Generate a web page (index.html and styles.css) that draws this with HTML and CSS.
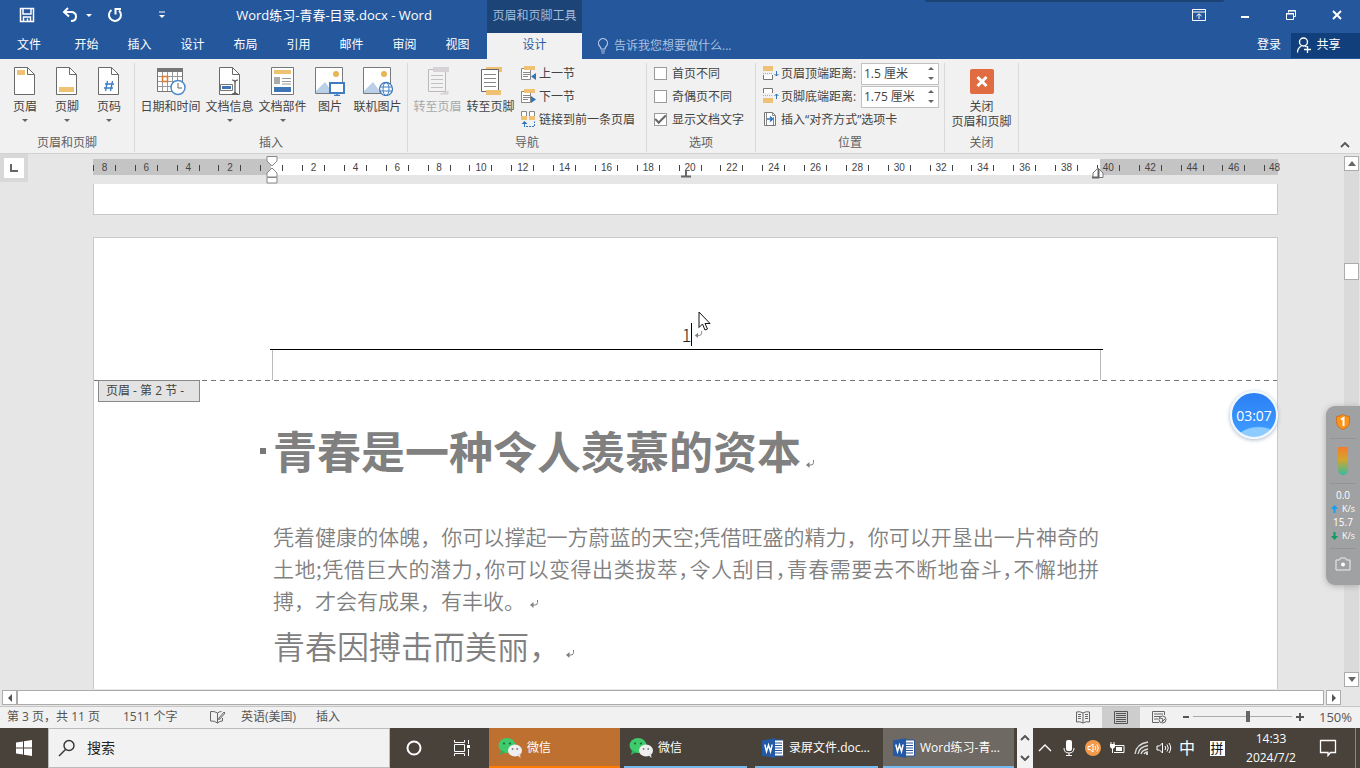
FILE: index.html
```
<!DOCTYPE html>
<html lang="zh-CN">
<head>
<meta charset="utf-8">
<title>Word练习-青春-目录.docx - Word</title>
<link rel="stylesheet" href="styles.css">
</head>
<body>
<svg class="defs" aria-hidden="true">
  <symbol id="wechat" viewBox="0 0 24 20">
    <ellipse cx="9" cy="7.500" rx="8.500" ry="7.500" fill="#3dcb6c"/><path d="M3 12l-1 5 5-3z" fill="#2bb55a"/>
    <circle cx="6" cy="5.500" r="1.100" fill="#1b6b35"/><circle cx="12" cy="5.500" r="1.100" fill="#1b6b35"/>
    <ellipse cx="17" cy="12.500" rx="7" ry="6" fill="#efefef"/><path d="M19 17l3.500 3-.5-5z" fill="#e0e0e0"/>
    <circle cx="14.600" cy="11" r=".9" fill="#777"/><circle cx="19.200" cy="11" r=".9" fill="#777"/>
  </symbol>
  <symbol id="word" viewBox="0 0 22 20">
    <path d="M11 2h10.500v16H11z" fill="#fff" stroke="#2b579a"/><path d="M13 5h7M13 7.500h7M13 10h7M13 12.500h7M13 15h7" stroke="#2b579a" stroke-width="1.200"/>
    <path d="M0 2.500L13 0v20L0 17.500z" fill="#2459a5"/><path d="M2.800 6.500l1.700 7 2-6.500 2 6.500 1.700-7" fill="none" stroke="#fff" stroke-width="1.500"/>
  </symbol>
  <symbol id="return" viewBox="0 0 10 10"><path d="M8.500 1v2.500Q8.500 6 6 6H2" fill="none" stroke="#808080"/><path d="M4.500 3v6L1 6z" fill="#808080"/></symbol>
  <symbol id="page" viewBox="0 0 24 30"><path d="M1.500 1.500h13l7 7v20h-20z" fill="#fff" stroke="#6a6a6a"/><path d="M14.500 1.500v7h7" fill="none" stroke="#6a6a6a"/></symbol>
  <symbol id="picture" viewBox="0 0 32 30"><path d="M1.500 1.500h27v26h-27z" fill="#fff" stroke="#7a7a7a"/><circle cx="22" cy="8" r="3" fill="#e9b455"/><path d="M2 25l9-9 8 11H2z" fill="#b9d0e8"/></symbol>
</svg>

<header class="titlebar">
  <div class="title-left">
    <div class="quick-access">
      <button class="qa save" aria-label="保存"><svg width="16" height="16" viewBox="0 0 16 16"><path d="M1.500 1.500h13v13h-13zM4 1.500v5.500h8V1.500M4.500 14.500V10h7v4.500M8.500 11.500v3" fill="none" stroke="#fff" stroke-width="1.500"/></svg></button>
      <button class="qa undo" aria-label="撤消"><svg width="16" height="16" viewBox="0 0 16 16"><path d="M6 1L2 5l5 4.500M2.500 5H9q5 0 5 4.500T9 14" fill="none" stroke="#fff" stroke-width="2"/></svg><i class="caret"></i></button>
      <button class="qa redo" aria-label="重复"><svg width="16" height="16" viewBox="0 0 16 16"><path d="M4.500 3A6 6 0 1 0 12 3.500M8.500 7.500V2H14" fill="none" stroke="#fff" stroke-width="2"/></svg></button>
      <button class="qa custom" aria-label="自定义快速访问工具栏"><svg width="8" height="8" viewBox="0 0 8 8"><path d="M1 1h6" stroke="#fff"/><path d="M1 4h6L4 7z" fill="#fff"/></svg></button>
    </div>
    <h1 class="doc-title">Word练习-青春-目录.docx - Word</h1>
  </div>
  <div class="tool-tab">页眉和页脚工具</div>
  <div class="window-buttons">
    <button aria-label="功能区显示选项"><svg width="14" height="12" viewBox="0 0 14 12"><path d="M.5.5h13v11H.5zM.5 3h13M7 10V5M4.500 7L7 4.800 9.500 7" fill="none" stroke="#fff"/></svg></button>
    <button aria-label="最小化"><svg width="12" height="12" viewBox="0 0 12 12"><path d="M2 8h8" stroke="#fff" stroke-width="2"/></svg></button>
    <button aria-label="还原"><svg width="12" height="12" viewBox="0 0 12 12"><path d="M3.500 3.500v-2h7v6h-2M1.500 4.500h7v6h-7zM1 5h8M3 2h8" fill="none" stroke="#fff"/></svg></button>
    <button aria-label="关闭"><svg width="12" height="12" viewBox="0 0 12 12"><path d="M2 2l8 8M10 2l-8 8" stroke="#fff" stroke-width="2"/></svg></button>
  </div>
</header>

<nav class="tabs">
  <button class="tab file">文件</button>
  <button class="tab">开始</button><button class="tab">插入</button><button class="tab">设计</button><button class="tab">布局</button><button class="tab">引用</button><button class="tab">邮件</button><button class="tab">审阅</button><button class="tab">视图</button>
  <button class="tab current">设计</button>
  <label class="tell-me"><svg width="12" height="16" viewBox="0 0 12 16"><path d="M4 11Q4 9.500 2.500 8A4.500 4.500 0 1 1 9.500 8Q8 9.500 8 11zM4 13h4M4.500 15h3" fill="none" stroke="#b4c9e6" stroke-width="1.200"/></svg><input type="text" aria-label="操作说明搜索" placeholder="告诉我您想要做什么..."></label>
  <button class="sign-in">登录</button>
  <button class="share"><svg width="16" height="18" viewBox="0 0 16 18"><circle cx="7.500" cy="6" r="4" fill="none" stroke="#fff" stroke-width="1.400"/><path d="M1.500 16.500q0-4.500 4-6.500M9 10l1.500 1M11.500 10v7M8 13.500h7" fill="none" stroke="#fff" stroke-width="1.300"/></svg>共享</button>
</nav>

<section class="ribbon">
  <div class="group g-hf">
    <div class="tools">
      <button class="big w42"><svg width="24" height="30"><use href="#page"/><path d="M4 4h8v5H4z" fill="#eec272"/></svg><span>页眉</span><i class="caret dark"></i></button>
      <button class="big w42"><svg width="24" height="30"><use href="#page"/><path d="M4 21h15v5H4z" fill="#eec272"/></svg><span>页脚</span><i class="caret dark"></i></button>
      <button class="big w42"><svg width="24" height="30"><use href="#page"/><path d="M10.500 15l-2 10M15.500 15l-2 10M8 18h9M7 22h9" stroke="#3a7fc4" stroke-width="1.300"/></svg><span>页码</span><i class="caret dark"></i></button>
    </div>
    <div class="group-name">页眉和页脚</div>
  </div>
  <div class="group g-insert">
    <div class="tools">
      <button class="big w65"><svg width="30" height="30" viewBox="0 0 30 30"><path d="M1.500 3.500h25v22h-25z" fill="#fff" stroke="#777"/><path d="M1 2h26v4H1z" fill="#777"/><path d="M6.500 6v19M11.500 6v19M16.500 6v19M21.500 6v19M2 10.500h24M2 15.500h24M2 20.500h24" stroke="#999"/><path d="M6.500 10.500h5v5h-5z" fill="none" stroke="#e07a2c" stroke-width="1.500"/><circle cx="22" cy="21.500" r="7" fill="#fff" stroke="#4c8bcb" stroke-width="1.500"/><path d="M22 17v5h4" fill="none" stroke="#666"/></svg><span>日期和时间</span></button>
      <button class="big w53"><svg width="24" height="30"><use href="#page"/><path d="M2.500 18.500h12v6h-12z" fill="#fff" stroke="#777"/><path d="M4 20h9v3H4z" fill="#3f75b5"/><path d="M14 14q3 0 3 2.500V26q0 2-3 2M20 14q-3 0-3 2.500V26q0 2 3 2" fill="none" stroke="#555" stroke-width="1.200"/></svg><span>文档信息</span><i class="caret dark"></i></button>
      <button class="big w53"><svg width="26" height="30"><path d="M1.500 1.500h22v27h-22z" fill="#fff" stroke="#777"/><path d="M4 4h17v4H4z" fill="#eec272"/><path d="M4 11h6v7H4z" fill="#aaa"/><path d="M12 12.500h9M12 15.500h9M12 18h9" stroke="#999"/><path d="M4 21h17v5H4z" fill="#3f75b5"/></svg><span>文档部件</span><i class="caret dark"></i></button>
      <button class="big w42"><svg width="32" height="30" viewBox="0 0 32 30"><use href="#picture"/><path d="M16 17h14v10H16z" fill="#fff" stroke="#3f7cc0" stroke-width="2"/><path d="M23 27v2M20 29.500h6" stroke="#3f7cc0" stroke-width="1.500"/></svg><span>图片</span></button>
      <button class="big w53"><svg width="32" height="30" viewBox="0 0 32 30"><use href="#picture"/><circle cx="24" cy="23" r="6.500" fill="#fff" stroke="#3f7cc0" stroke-width="1.300"/><ellipse cx="24" cy="23" rx="3" ry="6.500" fill="none" stroke="#3f7cc0"/><path d="M18 21h12M18 25h12" stroke="#3f7cc0"/></svg><span>联机图片</span></button>
    </div>
    <div class="group-name">插入</div>
  </div>
  <div class="group g-nav">
    <div class="tools">
      <button class="big w53 off" disabled><svg width="26" height="30"><path d="M15 28h8v-3" fill="#d6d2d6" stroke="#d6d2d6"/><path d="M3.500 3.500h17v22h-17z" fill="#f3f3f3" stroke="#bcb8bc"/><path d="M8 1h16v5H8z" fill="#d6d2d6"/><path d="M6 9.500h12M6 13.500h12M6 17.500h12M6 21.500h12" stroke="#c4c0c4"/></svg><span>转至页眉</span></button>
      <button class="big w53"><svg width="26" height="30"><path d="M8 1h16v5H8z" fill="#eec272"/><path d="M3.500 3.500h17v22h-17z" fill="#fff" stroke="#666"/><path d="M6 8.500h12M6 12.500h12M6 16.500h12M6 20.500h12" stroke="#888"/><path d="M8 24h15v5H8z" fill="#eec272"/></svg><span>转至页脚</span></button>
      <div class="rows">
        <button class="small"><svg width="17" height="17" viewBox="0 0 17 17"><path d="M1.500 3.500h9v11h-9z" fill="#fff" stroke="#888"/><path d="M4 1h11v4H4z" fill="#eec272"/><path d="M3 7.500h7M3 9.500h7M3 11.500h5" stroke="#888"/><path d="M16 8v7l-5-3.500z" fill="#2f75b8"/></svg>上一节</button>
        <button class="small"><svg width="17" height="17" viewBox="0 0 17 17"><path d="M1.500 3.500h9v11h-9z" fill="#fff" stroke="#888"/><path d="M4 1h11v4H4z" fill="#eec272"/><path d="M3 7.500h7M3 9.500h7M3 11.500h5" stroke="#888"/><path d="M11 8v7l5-3.500z" fill="#2f75b8"/></svg>下一节</button>
        <button class="small"><svg width="17" height="17" viewBox="0 0 17 17"><path d="M1.500 5V.5h5V5M9.500 5V.5h5V5" fill="#fff" stroke="#888"/><path d="M1 5h6v4H1zM9 5h6v4H9z" fill="#eec272"/><path d="M1.500 13L4.500 10l3 3zM4 12h1v4H4z" fill="#2f75b8"/><path d="M6 15.500h8.500v-5" fill="none" stroke="#2f75b8" stroke-dasharray="2 1"/></svg>链接到前一条页眉</button>
      </div>
    </div>
    <div class="group-name">导航</div>
  </div>
  <div class="group g-options">
    <div class="tools rows">
      <label class="check"><input type="checkbox">首页不同</label>
      <label class="check"><input type="checkbox">奇偶页不同</label>
      <label class="check"><input type="checkbox" checked>显示文档文字</label>
    </div>
    <div class="group-name">选项</div>
  </div>
  <div class="group g-position">
    <div class="tools rows">
      <div class="measure"><svg width="17" height="17" viewBox="0 0 17 17"><path d="M1 1h10v5H1z" fill="#eec272"/><path d="M1 8.500h10" stroke="#e0a84c" stroke-dasharray="1 1"/><path d="M1.500 10v4.500h9V10" fill="#fff" stroke="#777"/><path d="M14.500 6v5M12.500 9l2 2 2-2" fill="none" stroke="#2f75b8"/></svg><label for="top">页眉顶端距离:</label><div class="spin"><input id="top" type="text" value="1.5 厘米"><span class="steps"><button aria-label="增加"><i class="up"></i></button><button aria-label="减少"><i class="caret dark"></i></button></span></div></div>
      <div class="measure"><svg width="17" height="17" viewBox="0 0 17 17"><path d="M1.500 5V.5h9V5" fill="#fff" stroke="#777"/><path d="M1 7.500h10" stroke="#e0a84c" stroke-dasharray="1 1"/><path d="M1 10h10v5H1z" fill="#eec272"/><path d="M14.500 11V6M12.500 8l2-2 2 2" fill="none" stroke="#2f75b8"/></svg><label for="bottom">页脚底端距离:</label><div class="spin"><input id="bottom" type="text" value="1.75 厘米"><span class="steps"><button aria-label="增加"><i class="up"></i></button><button aria-label="减少"><i class="caret dark"></i></button></span></div></div>
      <button class="small"><svg width="17" height="17" viewBox="0 0 17 17"><path d="M2.500 1.500h8l3 3v10h-11z" fill="#fff" stroke="#777"/><path d="M10.500 1.500v3h3M4.500 2v12M11.500 6v8" fill="none" stroke="#888"/><path d="M5 8h5M8 5.500L10.500 8 8 10.500" fill="none" stroke="#2f75b8" stroke-width="1.500"/></svg>插入“对齐方式”选项卡</button>
    </div>
    <div class="group-name">位置</div>
  </div>
  <div class="group g-close">
    <div class="tools"><button class="big"><svg width="26" height="30"><rect x="1" y="3" width="24" height="25" rx="2" fill="#e16c41"/><path d="M8.500 11l9 9M17.500 11l-9 9" stroke="#fff" stroke-width="3"/></svg><span>关闭<br>页眉和页脚</span></button></div>
    <div class="group-name">关闭</div>
  </div>
  <button class="collapse" aria-label="折叠功能区"><svg width="10" height="8" viewBox="0 0 10 8"><path d="M1 6l4-4 4 4" fill="none" stroke="#555" stroke-width="1.800"/></svg></button>
</section>

<main class="workspace">
  <div class="canvas">
    <button class="tab-stop" aria-label="制表符"><svg width="10" height="10" viewBox="0 0 10 10"><path d="M2 1v7h7" fill="none" stroke="#666" stroke-width="2"/></svg></button>
    <div class="ruler">
      <div class="cell"><span>8</span></div><div class="cell"><span>6</span></div><div class="cell"><span>4</span></div><div class="cell"><span>2</span></div><div class="cell"><span></span></div><div class="cell"><span>2</span></div><div class="cell"><span>4</span></div><div class="cell"><span>6</span></div><div class="cell"><span>8</span></div><div class="cell"><span>10</span></div><div class="cell"><span>12</span></div><div class="cell"><span>14</span></div><div class="cell"><span>16</span></div><div class="cell"><span>18</span></div><div class="cell"><span>20</span></div><div class="cell"><span>22</span></div><div class="cell"><span>24</span></div><div class="cell"><span>26</span></div><div class="cell"><span>28</span></div><div class="cell"><span>30</span></div><div class="cell"><span>32</span></div><div class="cell"><span>34</span></div><div class="cell"><span>36</span></div><div class="cell"><span>38</span></div><div class="cell"><span>40</span></div><div class="cell"><span>42</span></div><div class="cell"><span>44</span></div><div class="cell"><span>46</span></div><div class="cell last"><span>48</span></div>
      <svg class="mark indent" width="12" height="28" viewBox="0 0 12 28"><path d="M1 .5h10V5L6 10 1 5zM6 12l5 5v4H1v-4zM1 21.500h10v5.500H1z" fill="#fff" stroke="#888"/></svg>
      <svg class="mark center-tab" width="10" height="10" viewBox="0 0 10 10"><path d="M5 2v7M0 8.500h10" stroke="#666" stroke-width="2"/></svg>
      <svg class="mark right-indent" width="12" height="12" viewBox="0 0 12 12"><path d="M6 1l5 5v4.500H1V6z" fill="#fff" stroke="#777"/><path d="M6.500 2v9M0 10.500h7" stroke="#666" stroke-width="2"/></svg>
    </div>
    <div class="sheet previous"></div>
    <article class="sheet current-page">
      <div class="page-header">
        <div class="header-text">1<i class="cursor"></i><svg width="9" height="9"><use href="#return"/></svg></div>
        <div class="header-tail"></div>
        <div class="section-tag">页眉 - 第 2 节 -</div>
      </div>
      <div class="page-body">
        <h2>青春是一种令人羡慕的资本<svg width="10" height="10"><use href="#return"/></svg></h2>
        <p class="text"><span class="line">凭着健康的体魄，你可以撑起一方蔚蓝的天空;凭借旺盛的精力，你可以开垦出一片神奇的</span><span class="line tight">土地;凭借巨大的潜力，你可以变得出类拔萃，令人刮目，青春需要去不断地奋斗，不懈地拼</span><span class="end">搏，才会有成果，有丰收。<svg width="10" height="10"><use href="#return"/></svg></span></p>
        <p class="large">青春因搏击而美丽，<svg width="10" height="10"><use href="#return"/></svg></p>
      </div>
    </article>
  </div>
  <div class="vscroll"><button aria-label="向上滚动"><svg width="8" height="5"><path d="M0 5h8L4 0z" fill="#666"/></svg></button><div class="track"><div class="thumb"></div></div><button aria-label="向下滚动"><svg width="8" height="5"><path d="M0 0h8L4 5z" fill="#666"/></svg></button></div>
</main>

<div class="hscroll"><button aria-label="向左滚动"><svg width="6" height="8"><path d="M5 0v8L1 4z" fill="#555"/></svg></button><div class="hthumb"></div><button aria-label="向右滚动"><svg width="6" height="8"><path d="M1 0v8l4-4z" fill="#555"/></svg></button></div>

<footer class="status">
  <span class="s-page">第 3 页，共 11 页</span><span class="s-words">1511 个字</span>
  <svg class="s-proof" width="16" height="14" viewBox="0 0 16 14"><path d="M7.500 3q-3-2-7-1.500v9.500q4-.5 7 2V3q2-1.500 4-1.500M7.500 13q2-2 5-2V8M9 8l5-6 1 1-5 6-1.500.5z" fill="none" stroke="#666"/></svg>
  <span class="s-lang">英语(美国)</span><span>插入</span>
  <div class="views">
    <button aria-label="阅读视图"><svg width="14" height="13" viewBox="0 0 14 13"><path d="M7 2Q4 0 .5 1v10Q4 10 7 12q3-2 6.500-1V1Q10 0 7 2v10M2 3.500h3M2 5.500h3M2 7.500h3M9 3.500h3M9 5.500h3M9 7.500h3" fill="none" stroke="#666"/></svg></button>
    <button class="on" aria-label="页面视图"><svg width="14" height="13" viewBox="0 0 14 13"><path d="M.5.5h13v12H.5zM2 2.500h10M2 4.500h10M2 6.500h10M2 8.500h10M2 10.500h10" fill="none" stroke="#555"/></svg></button>
    <button aria-label="Web 版式视图"><svg width="15" height="13" viewBox="0 0 15 13"><path d="M12.500 4V.5H.5v11H7M2 3h9M2 5.500h7M2 8h4" fill="none" stroke="#666"/><circle cx="10.500" cy="8.500" r="3.500" fill="#eee" stroke="#666"/><path d="M8 7l3 1-1 3 3-3" fill="none" stroke="#666"/></svg></button>
  </div>
  <button class="zoom-step" aria-label="缩小"><svg width="8" height="8"><path d="M1 4h6" stroke="#555" stroke-width="2"/></svg></button>
  <input class="zoom" type="range" min="0" max="100" value="56" aria-label="缩放">
  <button class="zoom-step" aria-label="放大"><svg width="8" height="8"><path d="M0 4h8M4 0v8" stroke="#555" stroke-width="2"/></svg></button>
  <span class="percent">150%</span>
</footer>

<div class="taskbar">
  <button class="start" aria-label="开始"><svg width="16" height="16" viewBox="0 0 16 16"><path d="M0 2.500L7 1.500v6H0zM8 1.300L16 0v7.500H8zM0 8.500h7v6L0 13.500zM8 8.500h8V16l-8-1.300z" fill="#fff"/></svg></button>
  <label class="search"><svg width="18" height="18" viewBox="0 0 18 18"><circle cx="11" cy="6.500" r="5" fill="none" stroke="#333" stroke-width="1.400"/><path d="M7.500 10.500L1 17" stroke="#333" stroke-width="1.500"/></svg><input type="text" placeholder="搜索" aria-label="搜索"></label>
  <button class="sys" aria-label="Cortana"><svg width="16" height="16"><circle cx="8" cy="8" r="6.500" fill="none" stroke="#fff" stroke-width="2"/></svg></button>
  <button class="sys" aria-label="任务视图"><svg width="18" height="16" viewBox="0 0 18 16"><path d="M1.500 0v2.500h10V0M1.500 16v-2.500h10V16M1.500 4.500h10v7h-10zM15.500 0v4M15.500 9v7" fill="none" stroke="#fff"/><path d="M14 5h3v3h-3z" fill="#fff"/></svg></button>
  <button class="app alert"><svg width="24" height="20"><use href="#wechat"/></svg><span>微信</span></button>
  <button class="app"><svg width="24" height="20"><use href="#wechat"/></svg><span>微信</span></button>
  <button class="app doc"><svg width="22" height="20"><use href="#word"/></svg><span>录屏文件.doc...</span></button>
  <button class="app active"><svg width="22" height="20"><use href="#word"/></svg><span>Word练习-青...</span></button>
  <div class="task-scroll"><button aria-label="上一行"><svg width="10" height="6"><path d="M1 5l4-4 4 4" fill="none" stroke="#555" stroke-width="2"/></svg></button><button aria-label="下一行"><svg width="10" height="6"><path d="M1 1l4 4 4-4" fill="none" stroke="#555" stroke-width="2"/></svg></button></div>
  <div class="tray">
    <button aria-label="显示隐藏的图标"><svg width="14" height="8"><path d="M1 7l6-6 6 6" fill="none" stroke="#fff" stroke-width="1.400"/></svg></button>
    <button aria-label="麦克风"><svg width="12" height="16" viewBox="0 0 12 16"><rect x="3" y="0" width="6" height="11" rx="2" fill="#fff"/><path d="M1 8q0 5 5 5t5-5M6 13v2M3 15.500h6" fill="none" stroke="#fff"/></svg></button>
    <button aria-label="音频"><svg width="16" height="16" viewBox="0 0 16 16"><circle cx="8" cy="8" r="8" fill="#f39a4a"/><path d="M3 6.500h2L8 4v8L5 9.500H3zM10 6q1.500 2 0 4M12 4.500q2.500 3.500 0 7" fill="none" stroke="#fff"/></svg></button>
    <button aria-label="电池"><svg width="16" height="12" viewBox="0 0 16 12"><path d="M6 3.500h9v7H5" fill="none" stroke="#fff"/><path d="M7 5h6v4H7zM1 2h5v3L4.500 6.500h-2L1 5z" fill="#fff"/><path d="M2 0v2M5 0v2M3.500 6v5" stroke="#fff"/></svg></button>
    <button aria-label="网络"><svg width="15" height="14" viewBox="0 0 15 14"><path d="M1 13Q2 3 14 1M4 13q1-7 10-8.500M7 13q1-4 7-5M10 13q1-2 4-2" fill="none" stroke="#ddd" stroke-width="1.300"/><circle cx="13" cy="13" r="1" fill="#fff"/></svg></button>
    <button class="volume" aria-label="音量"><svg width="16" height="14" viewBox="0 0 16 14"><path d="M1 5h2.500L6.500 2v10L3.500 9H1zM9 5q1.500 2 0 4M11 3.500q2.500 3.500 0 7M13 2q3.500 5 0 10" fill="none" stroke="#fff"/></svg></button>
    <button class="ime">中</button>
    <button class="pinyin"><span>拼</span></button>
    <button class="clock"><span>14:33</span><span>2024/7/2</span></button>
    <button class="notice" aria-label="通知"><svg width="18" height="18" viewBox="0 0 18 18"><path d="M1.500 1.500h15v12h-5L9 16.500v-3H1.500z" fill="none" stroke="#fff" stroke-width="1.300"/></svg></button>
  </div>
</div>

<div class="recorder-edge"></div>
<div class="timer">03:07</div>
<aside class="monitor">
  <svg width="14" height="16" viewBox="0 0 14 16"><path d="M7 .5q3 2 6.500 2V8q0 5-6.500 7.500Q.5 13 .5 8V2.500q3.500 0 6.500-2z" fill="#fb9317" stroke="#c9742a"/><path d="M5 5.500L7.500 4v8" fill="none" stroke="#fff" stroke-width="2"/></svg>
  <hr>
  <div class="meter"></div>
  <hr>
  <div class="rate"><b>0.0</b><span><svg width="7" height="8"><path d="M3.500 0L7 4H4.500v4h-2V4H0z" fill="#149ff5"/></svg>K/s</span></div>
  <div class="rate"><b>15.7</b><span><svg width="7" height="8"><path d="M3.500 8L7 4H4.500V0h-2v4H0z" fill="#0c9c62"/></svg>K/s</span></div>
  <hr>
  <svg width="16" height="14" viewBox="0 0 16 14"><path d="M1 3h3.500l1-2h5l1 2H15v10H1z" fill="none" stroke="#eee"/><circle cx="8" cy="7.500" r="2" fill="#fff"/></svg>
</aside>
<svg class="pointer" width="13" height="20" viewBox="0 0 13 20"><path d="M1 1v15.500l3.500-3.500 2.500 6 2.500-1-2.500-5.500h5z" fill="#fff" stroke="#111"/></svg>
</body>
</html>
```

FILE: styles.css
```
* { box-sizing: border-box; }
body {
  margin: 0;
  height: 100vh;
  display: flex;
  flex-direction: column;
  overflow: hidden;
  background: #e6e6e6;
  color: #444;
  font: 12px/18px "Open Sans", "Noto Sans CJK SC", sans-serif;
}
button, input { font: inherit; color: inherit; }
button { padding: 0; border: 0; background: none; display: flex; align-items: center; justify-content: center; }
svg { flex: none; }
.defs { position: absolute; width: 0; height: 0; }
.caret, .up { display: block; border: 3px solid transparent; border-bottom: 0; border-top-color: #fff; }
.caret.dark { border-top-color: #666; }
.up { border: 3px solid transparent; border-top: 0; border-bottom-color: #666; }

.titlebar, .tabs { display: flex; background: #24579b; color: #fff; flex: none; }
.titlebar { height: 33px; }
.title-left { flex: 0 0 487px; display: flex; align-items: center; padding-bottom: 3px; }
.quick-access { flex: 0 0 181px; display: flex; align-items: center; padding: 0 15px 0 19px; justify-content: space-between; }
.undo { gap: 8px; margin-left: 12px; }
.redo { margin-right: 20px; }
.doc-title { flex: 1; margin: 0; font-size: 13px; font-weight: 400; text-align: center; white-space: nowrap; }
.tool-tab { flex: 0 0 95px; background: #1d4476; color: #a3bddd; line-height: 32px; text-align: center; white-space: nowrap; }
.window-buttons { margin-left: auto; display: flex; }
.window-buttons button { width: 46px; height: 30px; }

.tabs { height: 26px; }
.tab { width: 53px; padding-bottom: 3px; }
.tab.file { width: 58px; margin-right: 2px; }
.tab.current { width: 95px; margin-left: 3px; background: #f1f1f1; color: #2b5fa5; }
.tell-me { flex: 1; display: flex; align-items: center; gap: 5px; padding-left: 15px; }
.tell-me input { flex: 1; border: 0; background: none; padding: 0; }
.tell-me input::placeholder { color: #a9c1e1; opacity: 1; }
.sign-in { padding: 0 10px 3px; }
.share { width: 69px; height: 25px; background: #103f7c; gap: 4px; padding: 0 14px 2px 0; }

.ribbon { flex: none; height: 95px; display: flex; background: #f1f1f1; border-bottom: 1px solid #d2d2d2; padding: 4px 0 1px; }
.group { display: flex; flex-direction: column; border-right: 1px solid #d9d9d9; }
.tools { flex: 1; display: flex; }
.group-name { text-align: center; color: #5f5f5f; line-height: 18px; }
.g-hf { width: 135px; }
.g-hf .tools { padding-left: 4px; }
.g-insert { width: 273px; }
.g-insert .tools { padding-left: 3px; }
.g-nav { width: 239px; }
.g-nav .tools { padding-left: 3px; }
.g-options { width: 109px; }
.g-options .tools { padding-left: 7px; }
.g-position { width: 189px; }
.g-position .tools { padding-left: 6px; }
.g-close { width: 74px; }
.big { flex-direction: column; justify-content: flex-start; padding-top: 3px; white-space: nowrap; }
.big span { display: block; line-height: 15px; margin-top: 3px; }
.big .caret { margin-top: 5px; }
.w42 { width: 42px; }
.w53 { width: 53px; }
.w65 { width: 65px; }
.off { color: #a8a8a8; }
.g-close .big { flex: 1; }
.rows { display: flex; flex-direction: column; align-items: flex-start; margin-top: -1px; }
.g-nav .rows { margin-left: 3px; }
.small, .check, .measure { display: flex; align-items: center; height: 23px; gap: 2px; white-space: nowrap; }
.check { gap: 5px; }
.check input { appearance: none; width: 13px; height: 13px; margin: 0; border: 1px solid #9b9b9b; background: #fff; display: grid; place-items: center; }
.check input:checked::before { content: ""; width: 9px; height: 4px; border: 2px solid #666; border-width: 0 0 2px 2px; rotate: -45deg; margin-bottom: 3px; }
.measure label { width: 78px; }
.spin { display: flex; width: 78px; height: 22px; background: #fff; border: 1px solid #c1c1c1; padding: 0 4px 0 2px; }
.spin input { flex: 1; min-width: 0; border: 0; background: none; padding: 0; }
.steps { display: flex; flex-direction: column; justify-content: space-around; }
.collapse { margin-left: auto; align-self: flex-end; width: 30px; height: 14px; }

.workspace { flex: 1; min-height: 0; display: flex; }
.canvas { flex: 1; min-width: 0; position: relative; padding: 5px 66px 0 93px; display: flex; flex-direction: column; overflow: hidden; }
.tab-stop { position: absolute; left: 0; top: 0; width: 28px; height: 28px; background: #fff; border: 4px solid #d8d8d8; }
.ruler { position: relative; flex: none; height: 16px; display: flex; margin-bottom: 9px; background: linear-gradient(90deg, #c4c4c4 15%, #fff 15% 85%, #c4c4c4 85%); font: 10px/16px "Liberation Sans", sans-serif; }
.cell { flex: 0 0 3.53%; min-width: 0; }
.cell span { width: 23px; height: 16px; display: flex; justify-content: space-between; align-items: center; padding-top: 2px; }
.cell span::before, .cell span::after { content: ""; width: 1px; height: 6px; background: #444; }
.cell.last { flex-basis: 0; }
.cell.last span::after { display: none; }
.cell.last span { width: 16px; }
.mark { position: absolute; }
.indent { left: calc(15% - 5px); top: -3px; }
.center-tab { left: calc(50% - 5px); top: 9px; }
.right-indent { left: calc(85% - 8px); top: 8px; }
.sheet { background: #fff; border: 1px solid #c9c9c9; }
.previous { flex: 0 0 31px; border-top: 0; margin-bottom: 22px; }
.current-page { flex: 1; border-bottom: 0; min-height: 0; }
.page-header { position: relative; height: 143px; padding: 84px 174px 0 176px; background: repeating-linear-gradient(90deg, #777 0 5px, transparent 5px 9px) bottom / 100% 1px no-repeat; }
.header-text { height: 28px; border-bottom: 1px solid #000; display: flex; align-items: center; justify-content: center; padding: 0 0 3px 12px; color: #222; font: 18px/24px "Noto Sans CJK SC", sans-serif; font-weight: 300; }
.cursor { width: 1px; height: 23px; background: #000; margin-right: 2px; }
.header-tail { margin: 0 2px; height: 30px; border: 1px solid #bbb; border-width: 0 1px; }
.section-tag { position: absolute; left: 4px; top: 142px; width: 102px; border: 1px solid #8a8a8a; background: #e3e3e3; line-height: 20px; padding-left: 7px; white-space: nowrap; }
.page-body { padding: 37px 178px 0 179px; color: #808080; font-family: "Noto Sans CJK SC", sans-serif; }
.page-body h2 { position: relative; margin: 0 0 38px; font-size: 44px; line-height: 64px; font-weight: 700; white-space: nowrap; }
.page-body h2::before { content: ""; position: absolute; left: -13px; top: 30px; width: 6px; height: 6px; background: #777; }
.page-body p { margin: 0; white-space: nowrap; font-weight: 350; color: #808080; }
.page-body svg { margin-left: 4px; }
.text { font-size: 21px; line-height: 32px; }
.line { display: block; text-align: justify; text-align-last: justify; }
.tight { font-feature-settings: "halt"; }
.page-body .end { display: block; }
.page-body .large { font-size: 32px; line-height: 48px; margin-top: 5px; }

.vscroll { flex: 0 0 16px; display: flex; flex-direction: column; padding: 2px 0; }
.vscroll button { height: 15px; width: 15px; border: 1px solid #ababab; background: #fff; }
.track { flex: 1; width: 15px; background: #dadada; padding-top: 92px; }
.thumb { height: 17px; background: #fff; border: 1px solid #ababab; }
.hscroll { flex: none; height: 17px; display: flex; padding: 1px 19px 1px 2px; }
.hscroll button { width: 15px; border: 1px solid #ababab; background: #fff; }
.hthumb { flex: 1; background: #fff; border: 1px solid #ababab; margin-right: 2px; }

.status { flex: none; height: 22px; display: flex; align-items: center; background: #f1f1f1; border-top: 1px solid #c6c6c6; padding: 0 8px 2px 7px; color: #555; }
.s-page { width: 116px; }
.s-words { width: 87px; }
.s-lang { width: 75px; margin-left: 15px; }
.views { margin-left: auto; display: flex; align-self: stretch; margin-bottom: -2px; }
.views button { width: 38px; }
.views .on { background: #cdcdcd; }
.zoom-step { width: 15px; }
.zoom { appearance: none; width: 99px; height: 14px; margin: 0; background: linear-gradient(#aaa, #aaa) center / 100% 1px no-repeat; }
.zoom::-webkit-slider-thumb { appearance: none; width: 4px; height: 11px; background: #666; }
.percent { width: 45px; text-align: right; font-size: 13px; }

.taskbar { flex: none; height: 40px; display: flex; background: #48423a; color: #fff; }
.start { width: 48px; }
.search { flex: 0 0 342px; display: flex; align-items: center; gap: 11px; padding-left: 9px; background: #f2f2f2; border: 1px solid #bbb; color: #222; font-size: 14px; }
.search input { border: 0; background: none; flex: 1; padding: 0; }
.search input::placeholder { color: #222; opacity: 1; }
.sys { width: 48px; }
.app { width: 123px; justify-content: flex-start; gap: 5px; padding: 2px 0 0 5px; margin-right: 8px; border-bottom: 2px solid #76b9ed; white-space: nowrap; }
.doc { padding-left: 7px; }
.alert { width: 131px; margin: 0 4px 0 3px; padding-left: 9px; background: #bd702f; border-bottom-color: #ff7b00; }
.app.active { width: 131px; background: #6e6963; padding-left: 10px; margin: 0 3px 0 -3px; }
.task-scroll { width: 16px; background: #f2f2f2; display: flex; flex-direction: column; }
.task-scroll button { flex: 1; }
.tray { flex: 1; display: flex; }
.tray button { width: 24px; }
.tray .volume { width: 22px; }
.tray .ime { font-size: 16px; }
.tray .pinyin { width: 36px; font-size: 13px; }
.pinyin span { background: #fff; color: #111; width: 15px; line-height: 15px; }
.tray .clock { flex: 1; flex-direction: column; line-height: 19px; }
.tray .notice { width: 49px; margin-right: 4px; border-right: 1px solid #8a857e; padding-right: 7px; }

.recorder-edge { position: absolute; left: 68%; width: 22%; top: 0; height: 2px; background: #1c4376; border-radius: 0 0 3px 3px; }
.timer { position: absolute; right: 82px; top: 391px; width: 48px; height: 48px; border: 2px solid #f2f8ff; border-radius: 50%; background: radial-gradient(circle at 60% 150%, #8ecbff 44%, transparent 46%), linear-gradient(#2b80f5, #3f9dff); box-shadow: 0 1px 4px #a9b4c4; color: #fff; font-size: 14px; line-height: 45px; text-align: center; }
.monitor { position: absolute; right: 0; top: 406px; width: 34px; height: 179px; border-radius: 9px 0 0 9px; background: #9fa1a2; box-shadow: 0 1px 6px #aaa; color: #fff; display: flex; flex-direction: column; align-items: center; padding-top: 8px; }
.monitor hr { width: 26px; border: 0; border-top: 1px solid #929495; margin: 8px 0; }
.monitor .meter + hr { margin-bottom: 5px; }
.meter { width: 10px; height: 28px; border-radius: 0 0 5px 5px; background: linear-gradient(#f57a2c, #d3a62c 45%, #35bba0); }
.rate { display: flex; flex-direction: column; align-items: center; font-size: 10px; line-height: 13px; margin-bottom: 1px; }
.rate b { font-weight: 400; }
.rate span { display: flex; align-items: center; gap: 4px; font-size: 9px; }
.monitor .rate + hr { margin: 5px 0 8px; }
.pointer { position: absolute; left: 698px; top: 311px; }
```
